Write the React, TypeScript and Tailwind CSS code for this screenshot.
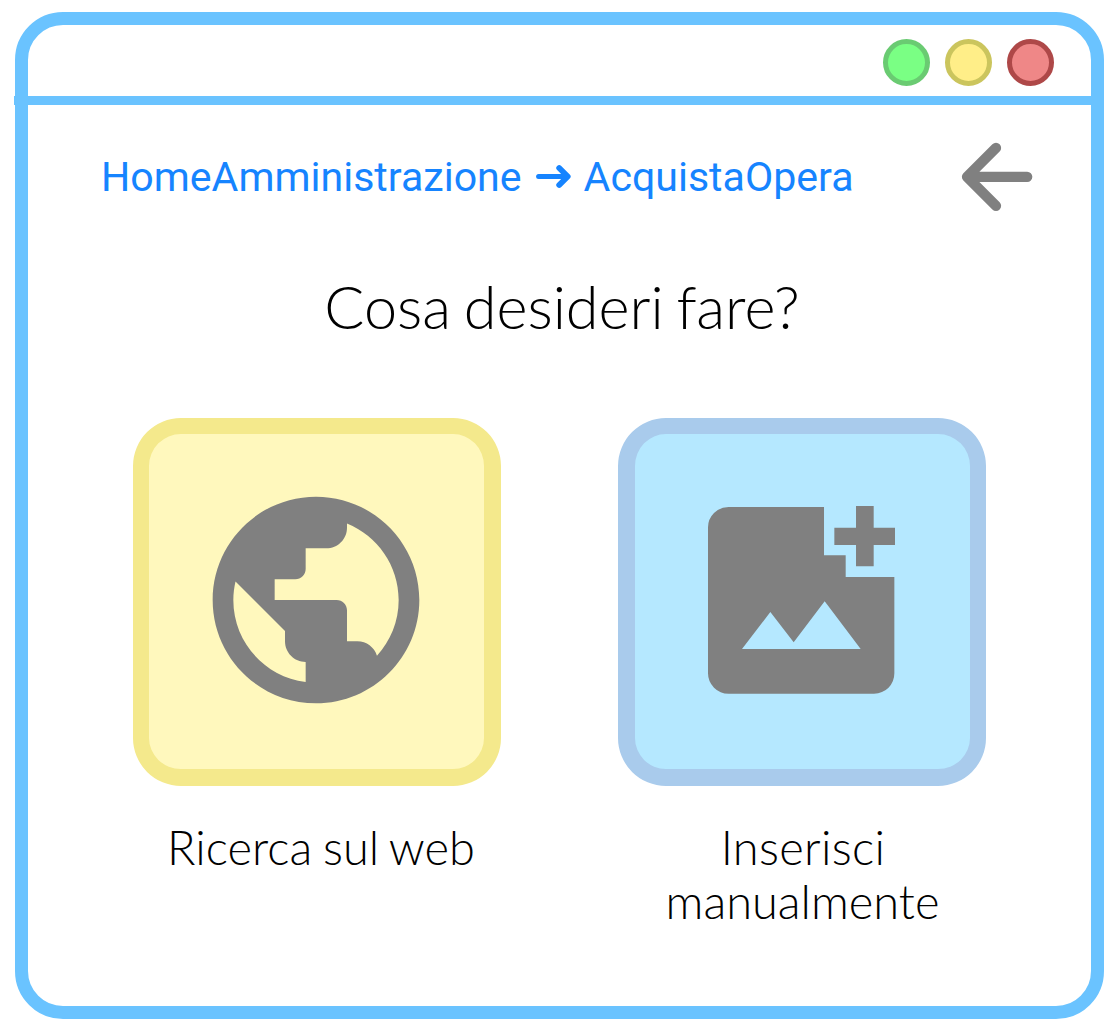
export default function App() {
  return (
    <div className="h-[1033px] w-[1118px] overflow-hidden bg-white pt-3 pl-[15px]">
      <div className="h-[1007px] w-[1089px] rounded-[48px] border-[13px] border-[#6ac3ff]">
        <header className="-ml-[14px] flex h-20 w-[1078px] justify-end gap-[15px] border-b-[9px] border-[#6ac3ff] pt-[14px] pr-[38px]">
          <span className="size-[47px] rounded-full border-5 border-[#6acb72] bg-[#7aff84]" />
          <span className="size-[47px] rounded-full border-5 border-[#cbc55d] bg-[#ffee88]" />
          <span className="size-[47px] rounded-full border-5 border-[#ae4848] bg-[#ef8787]" />
        </header>
        <div className="flex h-36 items-center justify-between pr-[59px] pl-[73px] font-[Roboto,sans-serif] text-[41.1px] text-[#1684ff]">
          <nav className="flex items-center whitespace-nowrap">
            <span className="pt-0.5">HomeAmministrazione</span>
            <svg className="mr-3 ml-[13px]" width="37" height="26" viewBox="0 0 37 26" fill="none" stroke="currentColor" strokeLinecap="round" strokeLinejoin="round"><path strokeWidth="5" d="M3.600 12.500H31" /><path strokeWidth="5.8" d="M24.200 4L32.700 12.500L24.200 21" /></svg>
            <span className="pt-0.5">AcquistaOpera</span>
          </nav>
          <svg width="72" height="70" viewBox="0 0 72 70" className="-mr-px" fill="none" stroke="#808080" strokeWidth="10.3" strokeLinecap="round" strokeLinejoin="round"><path d="M66.200 34.800H6M35 5.900L6 34.800L35 63.800" /></svg>
        </div>
        <h1 className="mt-[21px] pl-[5px] text-center font-[Lato,sans-serif] text-[59.4px] leading-[72px] font-light [word-spacing:-3.5px]">Cosa desideri fare?</h1>
        <main className="mt-[76px] flex gap-[117px] pl-[105px] font-[Lato,sans-serif] text-[47px] leading-[54px] font-light [word-spacing:-2px]">
          <div className="w-[368px] text-center">
            <div className="flex size-[368px] items-center justify-center rounded-[48px] border-[16px] border-r-[17px] border-b-[17px] border-[#f4e98c] bg-[#fff8bd] pr-[1.6px] pb-[3.8px]">
              <svg width="248" height="248" viewBox="0 0 24 24" fill="#808080"><path d="M12 2C6.48 2 2 6.48 2 12s4.48 10 10 10 10-4.48 10-10S17.52 2 12 2zm-1 17.93c-3.95-.49-7-3.85-7-7.93 0-.62.08-1.21.21-1.79L9 15v1c0 1.1.9 2 2 2v1.93zm6.900-2.540c-.26-.81-1-1.390-1.900-1.390h-1v-3c0-.55-.45-1-1-1H8v-2h2c.55 0 1-.45 1-1V7h2c1.100 0 2-.9 2-2v-.41c2.930 1.190 5 4.060 5 7.410 0 2.080-.8 3.970-2.100 5.390z" /></svg>
            </div>
            <p className="mt-[34px] pl-2">Ricerca sul web</p>
          </div>
          <div className="w-[368px] text-center">
            <div className="flex size-[368px] items-center justify-center rounded-[48px] border-[16px] border-b-[17px] border-l-[17px] border-[#a9cbec] bg-[#b5e8ff] pr-[2px] pb-[3.6px]">
              <svg width="187.7" height="187.7" viewBox="322 318 563 563" fill="#808080">
                <path fillRule="evenodd" d="M384 321H670V466H735V531H881V820Q881 845 863.500 863.500Q846 881 820 881H384Q358 881 340 863Q322 845 322 820V382Q322 357 340 339Q358 321 384 321ZM424 747H780L672 604L579 727L509 636Z" />
                <path d="M766 318H819V383H884V435H819V499H766V435H701V383H766Z" />
              </svg>
            </div>
            <p className="mt-[34px] pl-px"><span className="pl-px tracking-[0.3px]">Inserisci</span><br />manualmente</p>
          </div>
        </main>
      </div>
    </div>
  );
}
